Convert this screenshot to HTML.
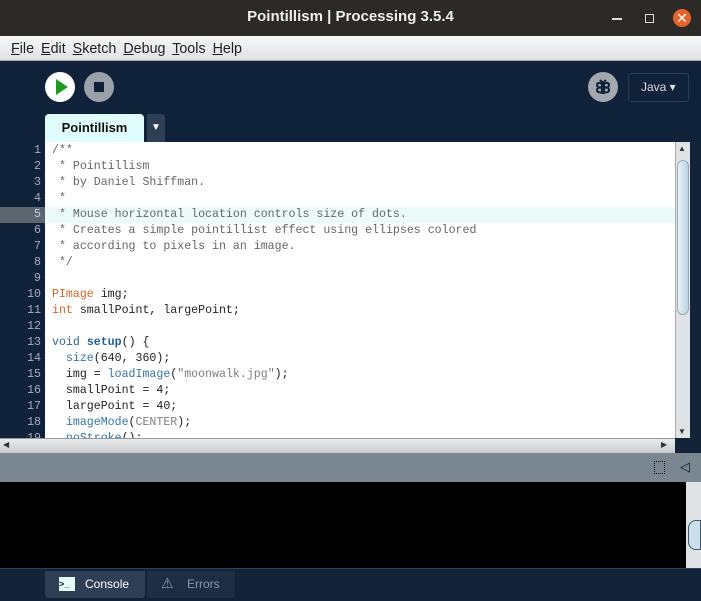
<!DOCTYPE html>
<html><head><style>
body{margin:0;width:701px;height:601px;overflow:hidden;background:#132338;font-family:"Liberation Sans",sans-serif;position:relative}
div{position:absolute;box-sizing:border-box}
.code{font-family:"Liberation Mono",monospace;font-size:11.6px;line-height:16px;white-space:pre;color:#222}
.c{color:#666}.o{color:#d9641e}.b{color:#3375a8}.bb{color:#1f5d96;font-weight:bold}.g{color:#7e7e7e}
</style></head><body>
<div style="left:0;top:0;width:701px;height:36px;background:#2c2a27"></div>
<div style="left:0;top:8px;width:701px;text-align:center;color:#eee;font-weight:bold;font-size:15px">Pointillism | Processing 3.5.4</div>
<div style="left:612px;top:18px;width:10px;height:1.5px;background:#ddd"></div>
<div style="left:645px;top:14px;width:9px;height:9px;border:1.5px solid #ddd"></div>
<div style="left:673px;top:9px;width:18px;height:18px;border-radius:50%;background:#e4632b;color:#fff;font-size:14px;text-align:center;line-height:18px">✕</div>
<div style="left:0;top:36px;width:701px;height:25px;background:linear-gradient(#f6f7f7,#dfe2e4);border-bottom:1px solid #aaa"></div>
<div style="left:11px;top:41px;font-size:14.3px;color:#222;word-spacing:3px"><u>F</u>ile <u>E</u>dit <u>S</u>ketch <u>D</u>ebug <u>T</u>ools <u>H</u>elp</div>
<div style="left:0;top:61px;width:701px;height:81px;background:#10213a"></div>
<div style="left:45px;top:72px;width:30px;height:30px;border-radius:50%;background:#fff"></div>
<div style="left:56px;top:79px;width:0;height:0;border-left:12px solid #1e9a21;border-top:8px solid transparent;border-bottom:8px solid transparent"></div>
<div style="left:84px;top:72px;width:30px;height:30px;border-radius:50%;background:#9aa1a8"></div>
<div style="left:94px;top:82px;width:10px;height:10px;background:#10213a"></div>
<div style="left:588px;top:72px;width:30px;height:30px;border-radius:50%;background:#a2a8ae"></div>
<svg style="position:absolute;left:588px;top:72px" width="30" height="30" viewBox="0 0 30 30" fill="none" stroke="#10213a" stroke-width="2"><path d="M14 9v13M16 9v13M14 12c-3-2-5-1-5 1s2 3 5 2M14 16c-3-1-5 0-5 2s2 3 5 2M16 12c3-2 5-1 5 1s-2 3-5 2M16 16c3-1 5 0 5 2s-2 3-5 2M12 8l2 2M18 8l-2 2"/></svg>
<div style="left:628px;top:73px;width:61px;height:29px;border:1px solid #2c3d52;border-radius:3px;color:#ddd;font-size:12px;line-height:27px;padding-left:12px">Java ▾</div>
<div style="left:45px;top:114px;width:99px;height:28px;background:#dffdfc;border-radius:4px 4px 0 0;text-align:center;line-height:28px;font-weight:bold;font-size:13px;color:#111">Pointillism</div>
<div style="left:147px;top:114px;width:18px;height:28px;background:#2e3f55;border-radius:0 4px 0 0;color:#fff;font-size:10px;text-align:center;line-height:28px">▼</div>
<div style="left:0;top:142px;width:45px;height:296px;background:#10213a"></div>
<div style="left:45px;top:142px;width:630px;height:296px;background:#fff"></div>
<div style="left:0;top:207px;width:45px;height:16px;background:#5b666f"></div>
<div style="left:45px;top:207px;width:630px;height:16px;background:#ebfbfb"></div>
<div class="code" style="left:0;top:143px;width:41px;text-align:right;color:#aab">1
2
3
4
<span style="color:#ccd">5</span>
6
7
8
9
10
11
12
13
14
15
16
17
18
19</div>
<div style="left:45px;top:142px;width:630px;height:296px;overflow:hidden"><div class="code" style="left:7px;top:1px"><span class="c">/**
 * Pointillism
 * by Daniel Shiffman.
 *
 * Mouse horizontal location controls size of dots.
 * Creates a simple pointillist effect using ellipses colored
 * according to pixels in an image.
 */</span>

<span class="o">PImage</span> img;
<span class="o">int</span> smallPoint, largePoint;

<span class="o" style="color:#33679a">void</span> <span class="bb">setup</span>() {
  <span class="b">size</span>(640, 360);
  img = <span class="b">loadImage</span>(<span class="g">"moonwalk.jpg"</span>);
  smallPoint = 4;
  largePoint = 40;
  <span class="b">imageMode</span>(<span class="g">CENTER</span>);
  <span class="b">noStroke</span>();</div></div>
<div style="left:675px;top:142px;width:15px;height:296px;background:#dfe3e5;border-left:1px solid #aaa"></div>
<div style="left:677px;top:160px;width:12px;height:155px;border-radius:6px;background:linear-gradient(90deg,#eaf2f6,#b9d3e2);border:1px solid #9ab"></div>
<div style="left:678px;top:144px;font-size:8px;color:#333">▲</div>
<div style="left:678px;top:427px;font-size:8px;color:#333">▼</div>
<div style="left:0;top:438px;width:675px;height:15px;background:linear-gradient(#e8eaeb,#c8cccf);border-top:1px solid #999"></div>
<div style="left:3px;top:440px;font-size:8px;color:#333">◀</div>
<div style="left:661px;top:440px;font-size:8px;color:#333">▶</div>
<div style="left:0;top:453px;width:701px;height:29px;background:#7a8690"></div>
<div style="left:654px;top:461px;width:11px;height:13px;border:1px dotted #111"></div>
<div style="left:680px;top:459px;font-size:13px;color:#111">◁</div>
<div style="left:0;top:482px;width:686px;height:86px;background:#000"></div>
<div style="left:686px;top:482px;width:15px;height:86px;background:#dfe3e5"></div>
<div style="left:688px;top:520px;width:13px;height:30px;border-radius:8px 0 0 8px;background:#c9dfe9;border:1px solid #456"></div>
<div style="left:0;top:568px;width:701px;height:33px;background:#142438;border-top:1px solid #2e4055"></div>
<div style="left:45px;top:571px;width:100px;height:27px;background:#2e3f55;border-radius:0 0 4px 4px"></div>
<div style="left:59px;top:577px;width:16px;height:14px;background:#e6fafa;font-size:9px;color:#123;line-height:14px;font-weight:bold">&gt;_</div>
<div style="left:85px;top:577px;color:#fff;font-size:12px">Console</div>
<div style="left:147px;top:571px;width:88px;height:27px;background:#1d2e44;border-radius:0 0 4px 4px"></div>
<div style="left:161px;top:575px;color:#99a;font-size:14px">⚠</div>
<div style="left:187px;top:577px;color:#8897a5;font-size:12px">Errors</div>
</body></html>
